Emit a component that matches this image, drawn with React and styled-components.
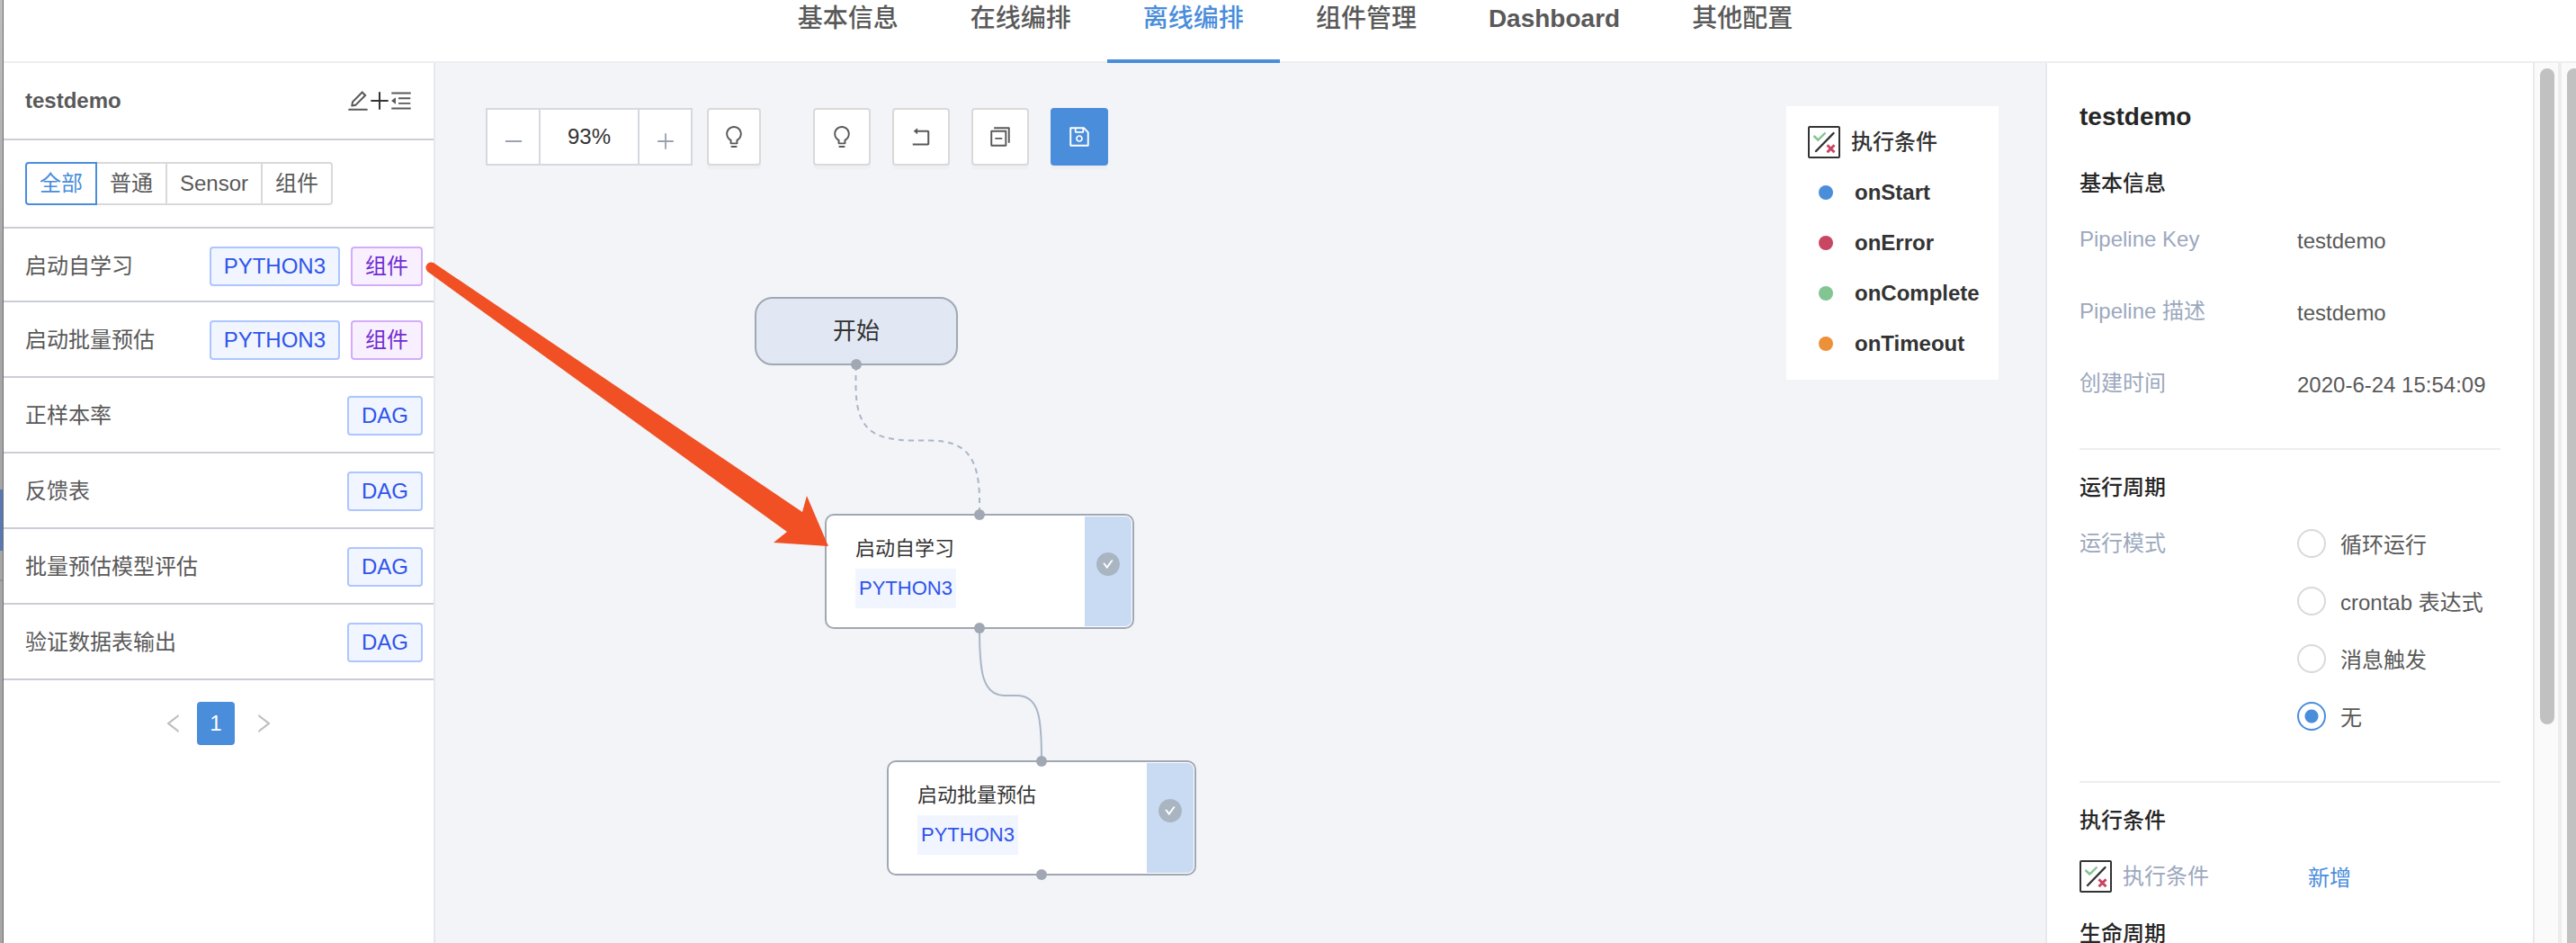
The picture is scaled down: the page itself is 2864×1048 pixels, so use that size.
import React, { useState } from "react";
import styled, { createGlobalStyle } from "styled-components";
import {
  AiOutlineEdit,
  AiOutlinePlus,
  AiOutlineMinus,
  AiOutlineMenuFold,
  AiOutlineLeft,
  AiOutlineRight,
  AiOutlineBulb,
  AiOutlineRollback,
  AiOutlineSwitcher,
  AiOutlineSave,
  AiFillCheckCircle,
} from "react-icons/ai";

const color = {
  primary: "#4a8ddb",
  text: "#595959",
  strong: "#333333",
  title: "#262626",
  label: "#9ca8bd",
  line: "#edeef0",
  rowLine: "#cbced9",
  border: "#d9d9d9",
  canvas: "#f2f4f8",
  nodeBorder: "#a1a8b3",
  edge: "#a9b6c7",
};

const GlobalStyle = createGlobalStyle`
  * { box-sizing: border-box; }
  body {
    margin: 0;
    color: ${color.text};
    background: #fff;
    font: 24px/36px "Liberation Sans", "Noto Sans CJK SC", sans-serif;
  }
  button, input { font: inherit; color: inherit; }
  button { padding: 0; cursor: pointer; }
  h1, h2, p, ul, dl, dd { margin: 0; padding: 0; }
`;

/* ---------- frame ---------- */

const Page = styled.div`
  position: relative;
  display: flex;
  height: 100vh;
  overflow: hidden;
`;

const Edge = styled.div`
  flex: none;
  display: flex;
  flex-direction: column;
  gap: 32px;
  width: 4px;
  padding-top: 544px;
  border-right: 1px solid #6e6e6e;
  background: linear-gradient(#bdbdbd, #a6a6a6 30%);
`;

const EdgeMark = styled.div`
  height: 68px;
  background: #5a78b4;
`;

const EdgeLine = styled.div`
  height: 2px;
  background: #939393;
`;

const Main = styled.div`
  flex: 1;
  min-width: 0;
  display: flex;
  flex-direction: column;
`;

const Nav = styled.nav`
  flex: none;
  display: flex;
  justify-content: center;
  height: 70px;
  padding-left: 12px;
  border-bottom: 2px solid ${color.line};
`;

const NavLink = styled.a`
  height: 70px;
  padding: 0 40px;
  border-bottom: 4px solid ${(p) => (p.$active ? color.primary : "transparent")};
  color: ${(p) => (p.$active ? color.primary : color.text)};
  font-size: 28px;
  font-weight: ${(p) => (p.$latin ? 700 : 500)};
  line-height: 42px;
  text-decoration: none;
`;

const Body = styled.div`
  flex: 1;
  min-height: 0;
  display: flex;
`;

/* ---------- sidebar ---------- */

const Sidebar = styled.aside`
  flex: none;
  width: 480px;
  border-right: 2px solid #e6e8ee;
`;

const SideHead = styled.header`
  display: flex;
  align-items: center;
  justify-content: space-between;
  height: 86px;
  padding: 0 24px;
  border-bottom: 2px solid ${color.rowLine};
`;

const SideTitle = styled.h1`
  font-size: 24px;
  font-weight: 700;
  line-height: 36px;
`;

const Actions = styled.div`
  display: flex;
`;

const IconButton = styled.button`
  display: flex;
  border: 0;
  background: none;
  color: ${(p) => (p.$dark ? color.strong : color.text)};
`;

const Filters = styled.div`
  display: flex;
  height: 98px;
  padding: 24px;
  border-bottom: 2px solid ${color.rowLine};
`;

const FilterLabel = styled.label`
  height: 48px;
  padding: 0 14px;
  border: 2px solid ${color.border};
  border-left-width: 0;
  line-height: 44px;
  cursor: pointer;

  &:first-child { border-left-width: 2px; border-radius: 4px 0 0 4px; }
  &:last-child { border-radius: 0 4px 4px 0; }
  &:has(input:checked) { border-color: ${color.primary}; color: ${color.primary}; }
  &:has(input:focus-visible) { outline: 2px solid ${color.primary}; }
`;

const HiddenRadio = styled.input`
  position: absolute;
  width: 1px;
  height: 1px;
  margin: 0;
  opacity: 0;
`;

const Rows = styled.ul`
  list-style: none;
`;

const Row = styled.li`
  display: flex;
  align-items: flex-start;
  gap: 12px;
  height: 84px;
  padding: 20px 12px 0 24px;
  border-bottom: 2px solid ${color.rowLine};

  &:first-child { height: 82px; }
`;

const RowName = styled.span`
  flex: 1;
  line-height: 44px;
`;

const tagTones = {
  blue: ["#2f54eb", "#f0f5ff", "#adc6ff"],
  purple: ["#722ed1", "#f9f0ff", "#d3adf7"],
};

const Tag = styled.span`
  height: 44px;
  padding: 0 14px;
  border: 2px solid ${(p) => tagTones[p.$tone][2]};
  border-radius: 4px;
  background: ${(p) => tagTones[p.$tone][1]};
  color: ${(p) => tagTones[p.$tone][0]};
  line-height: 40px;
`;

const Pager = styled.div`
  display: flex;
  align-items: center;
  justify-content: center;
  gap: 14px;
  padding: 24px 12px;
`;

const PagerArrow = styled.button`
  display: flex;
  border: 0;
  background: none;
  color: #bfbfbf;
`;

const PagerNumber = styled.button`
  width: 42px;
  height: 48px;
  margin-right: 6px;
  border: 0;
  border-radius: 4px;
  background: ${color.primary};
  color: #fff;
`;

/* ---------- canvas ---------- */

const Canvas = styled.main`
  position: relative;
  flex: 1;
  min-width: 0;
  overflow: hidden;
  background: ${color.canvas};
`;

const CanvasTop = styled.div`
  display: flex;
  align-items: flex-start;
  justify-content: space-between;
  padding: 48px 52px 0 56px;
`;

const Toolbar = styled.div`
  display: flex;
  align-items: flex-start;
  gap: 24px;
  padding-top: 2px;
`;

const ZoomTools = styled.div`
  display: flex;
  align-items: flex-end;
  gap: 16px;
  margin-right: 34px;
`;

const Zoom = styled.div`
  display: flex;
  height: 64px;
  border: 2px solid #d5d8de;
  background: #fff;
`;

const ZoomButton = styled.button`
  display: flex;
  align-items: center;
  justify-content: center;
  width: 57px;
  padding-top: 10px;
  border: 0;
  background: none;
  color: #9aa3b2;
`;

const ZoomValue = styled.output`
  width: 112px;
  border: solid #d5d8de;
  border-width: 0 2px;
  color: ${color.strong};
  line-height: 60px;
  text-align: center;
`;

const ToolButton = styled.button`
  display: flex;
  align-items: center;
  justify-content: center;
  width: ${(p) => (p.$narrow ? 60 : 64)}px;
  height: 64px;
  border: 2px solid ${(p) => (p.$primary ? color.primary : color.border)};
  border-radius: 4px;
  background: ${(p) => (p.$primary ? color.primary : "#fff")};
  box-shadow: 0 4px 0 rgba(0, 0, 0, 0.02);
  color: ${(p) => (p.$primary ? "#fff" : color.text)};
`;

const Legend = styled.section`
  width: 236px;
  padding: 22px 20px 12px 24px;
  background: #fff;
  color: ${color.strong};
`;

const LegendHead = styled.div`
  display: flex;
  align-items: center;
  gap: 12px;
  margin-bottom: 10px;
  font-weight: 500;
`;

const LegendItem = styled.div`
  display: flex;
  align-items: center;
  gap: 24px;
  height: 56px;
  padding-left: 12px;
  font-weight: 700;
`;

const Dot = styled.i`
  flex: none;
  width: 16px;
  height: 16px;
  border-radius: 50%;
  background: ${(p) => p.$color};
`;

const Edges = styled.svg`
  position: absolute;
  top: 0;
  left: 0;
  fill: none;
  stroke: ${color.edge};
  stroke-width: 2;
`;

const Node = styled.div`
  position: absolute;
  left: ${(p) => p.$x}px;
  top: ${(p) => p.$y}px;
  display: flex;
  border: 2px solid ${color.nodeBorder};
  color: ${color.strong};
`;

const StartNode = styled(Node)`
  align-items: center;
  justify-content: center;
  width: 226px;
  height: 76px;
  border-radius: 20px;
  background: #e1e8f4;
  font-size: 26px;
`;

const TaskNode = styled(Node)`
  justify-content: space-between;
  width: 344px;
  height: 128px;
  padding: 1px;
  border-radius: 10px;
  background: #fff;
`;

const TaskInfo = styled.div`
  display: flex;
  flex-direction: column;
  align-items: flex-start;
  padding: 18px 31px;
  font-size: 22px;
`;

const TaskType = styled.span`
  margin-top: 4px;
  padding: 0 4px;
  background: #f0f5ff;
  color: #2f54eb;
  line-height: 44px;
`;

const TaskState = styled.div`
  display: flex;
  justify-content: center;
  width: 52px;
  padding-top: 40px;
  border-radius: 0 7px 7px 0;
  background: #c9dbf3;
  color: #aab5c2;
`;

const CheckDisc = styled.span`
  display: flex;
  width: 26px;
  height: 26px;
  border-radius: 50%;
  background: radial-gradient(#fff 9px, transparent 10px);
`;

const Port = styled.i`
  position: absolute;
  left: 50%;
  ${(p) => p.$side}: -7px;
  width: 12px;
  height: 12px;
  margin-left: -6px;
  border-radius: 50%;
  background: ${color.nodeBorder};
`;

/* ---------- details ---------- */

const Details = styled.aside`
  flex: none;
  width: 544px;
  padding: 40px 36px 0;
  border: solid #e8e9ed;
  border-width: 0 2px;
  overflow: hidden;
`;

const DetailsTitle = styled.h1`
  margin-bottom: 36px;
  color: ${color.title};
  font-size: 28px;
  font-weight: 700;
  line-height: 40px;
`;

const Section = styled.section`
  margin-bottom: 24px;
  padding-bottom: ${(p) => (p.$divided ? 50 : 0)}px;
  border-bottom: ${(p) => (p.$divided ? 2 : 0)}px solid ${color.line};
`;

const SectionTitle = styled.h2`
  margin-bottom: 26px;
  color: ${color.title};
  font-size: 24px;
  font-weight: 500;
  line-height: 36px;
`;

const Fields = styled.dl`
  display: grid;
  grid-template-columns: 242px 1fr;
  row-gap: 40px;
`;

const FieldName = styled.dt`
  display: flex;
  gap: 12px;
  color: ${color.label};
  line-height: 36px;
`;

const FieldValue = styled.dd`
  line-height: 40px;
`;

const Modes = styled.div`
  display: flex;
  flex-direction: column;
  gap: 24px;
`;

const Mode = styled.label`
  display: flex;
  align-items: flex-start;
  gap: 16px;
  line-height: 40px;
  cursor: pointer;
`;

const ModeRadio = styled.input`
  appearance: none;
  width: 32px;
  height: 32px;
  margin: 2px 0 0;
  border: 2px solid ${color.border};
  border-radius: 50%;

  &:checked {
    border-color: ${color.primary};
    background: radial-gradient(${color.primary} 7px, #fff 8px);
  }
`;

const AddLink = styled.a`
  margin-left: 12px;
  color: ${color.primary};
  text-decoration: none;
`;

const Track = styled.div`
  flex: none;
  width: ${(p) => (p.$outer ? 16 : 30)}px;
  padding: 6px 0 0 6px;
  border-right: ${(p) => (p.$outer ? 0 : 4)}px solid #ececec;
  background: #fafafa;
  overflow: hidden;
`;

const Thumb = styled.div`
  width: 16px;
  height: ${(p) => p.$length};
  border-radius: 8px;
  background: #c1c1c1;
`;

const Pointer = styled.svg`
  position: absolute;
  left: 470px;
  top: 280px;
  pointer-events: none;
`;

/* Trims the empty margin that the icon set leaves round each glyph. */
const Icon = ({ of: Glyph, size = 24 }) => <Glyph size={size} viewBox="64 64 896 896" />;

const ConditionIcon = () => (
  <svg width="36" height="36" viewBox="0 0 36 36" fill="none" strokeWidth="2.4">
    <rect x="1" y="1" width="34" height="34" rx="1" stroke="#333" strokeWidth="2" />
    <path d="M6.5 11l4.8 4.5 8.2-8" stroke="#82c492" />
    <path d="M28.5 8L9 28" stroke="#333" strokeLinecap="round" />
    <path d="M21.5 21.2l8 8M29.5 21.2l-8 8" stroke="#c94663" strokeWidth="3" />
  </svg>
);

const tabs = ["基本信息", "在线编排", "离线编排", "组件管理", "Dashboard", "其他配置"];
const filters = ["全部", "普通", "Sensor", "组件"];
const components = [
  { name: "启动自学习", type: "PYTHON3", reusable: true },
  { name: "启动批量预估", type: "PYTHON3", reusable: true },
  { name: "正样本率", type: "DAG" },
  { name: "反馈表", type: "DAG" },
  { name: "批量预估模型评估", type: "DAG" },
  { name: "验证数据表输出", type: "DAG" },
];
const conditions = [
  ["onStart", "#4a8ddb"],
  ["onError", "#c94663"],
  ["onComplete", "#82c492"],
  ["onTimeout", "#ec9138"],
];
const tasks = [
  { name: "启动自学习", x: 433, y: 501 },
  { name: "启动批量预估", x: 502, y: 775 },
];
const modes = ["循环运行", "crontab 表达式", "消息触发", "无"];

export default function App() {
  const [filter, setFilter] = useState("全部");
  const [mode, setMode] = useState("无");

  return (
    <Page>
      <GlobalStyle />
      <Edge>
        <EdgeMark />
        <EdgeLine />
      </Edge>
      <Main>
        <Nav>
          {tabs.map((t) => (
            <NavLink key={t} href="#" $active={t === "离线编排"} $latin={t === "Dashboard"}>
              {t}
            </NavLink>
          ))}
        </Nav>
        <Body>
          <Sidebar>
            <SideHead>
              <SideTitle>testdemo</SideTitle>
              <Actions>
                <IconButton aria-label="编辑"><Icon of={AiOutlineEdit} /></IconButton>
                <IconButton aria-label="添加" $dark><Icon of={AiOutlinePlus} /></IconButton>
                <IconButton aria-label="收起"><Icon of={AiOutlineMenuFold} /></IconButton>
              </Actions>
            </SideHead>
            <Filters>
              {filters.map((f) => (
                <FilterLabel key={f}>
                  <HiddenRadio
                    type="radio"
                    name="filter"
                    checked={filter === f}
                    onChange={() => setFilter(f)}
                  />
                  {f}
                </FilterLabel>
              ))}
            </Filters>
            <Rows>
              {components.map((c) => (
                <Row key={c.name}>
                  <RowName>{c.name}</RowName>
                  <Tag $tone="blue">{c.type}</Tag>
                  {c.reusable && <Tag $tone="purple">组件</Tag>}
                </Row>
              ))}
            </Rows>
            <Pager>
              <PagerArrow aria-label="上一页"><Icon of={AiOutlineLeft} /></PagerArrow>
              <PagerNumber>1</PagerNumber>
              <PagerArrow aria-label="下一页"><Icon of={AiOutlineRight} /></PagerArrow>
            </Pager>
          </Sidebar>

          <Canvas>
            <CanvasTop>
              <Toolbar>
                <ZoomTools>
                  <Zoom>
                    <ZoomButton aria-label="缩小"><Icon of={AiOutlineMinus} size={22} /></ZoomButton>
                    <ZoomValue>93%</ZoomValue>
                    <ZoomButton aria-label="放大"><Icon of={AiOutlinePlus} size={22} /></ZoomButton>
                  </Zoom>
                  <ToolButton $narrow aria-label="提示"><Icon of={AiOutlineBulb} /></ToolButton>
                </ZoomTools>
                <ToolButton aria-label="帮助"><Icon of={AiOutlineBulb} /></ToolButton>
                <ToolButton aria-label="撤销"><Icon of={AiOutlineRollback} /></ToolButton>
                <ToolButton aria-label="收起全部"><Icon of={AiOutlineSwitcher} /></ToolButton>
                <ToolButton aria-label="保存" $primary><Icon of={AiOutlineSave} /></ToolButton>
              </Toolbar>
              <Legend>
                <LegendHead>
                  <ConditionIcon />
                  执行条件
                </LegendHead>
                {conditions.map(([name, c]) => (
                  <LegendItem key={name}>
                    <Dot $color={c} />
                    {name}
                  </LegendItem>
                ))}
              </Legend>
            </CanvasTop>

            <Edges width="900" height="920">
              <path
                d="M467.500 336V360C468 405 484 419 530 419.500H550C592 420 603 440 605 480V501"
                strokeDasharray="6 5"
              />
              <path d="M605 629C605 676 608 702 632 703H648C672 704 674 730 674 775" />
            </Edges>
            <StartNode $x={355} $y={260}>
              开始
              <Port $side="bottom" />
            </StartNode>
            {tasks.map((t) => (
              <TaskNode key={t.name} $x={t.x} $y={t.y}>
                <TaskInfo>
                  {t.name}
                  <TaskType>PYTHON3</TaskType>
                </TaskInfo>
                <TaskState>
                  <CheckDisc><Icon of={AiFillCheckCircle} size={26} /></CheckDisc>
                </TaskState>
                <Port $side="top" />
                <Port $side="bottom" />
              </TaskNode>
            ))}
          </Canvas>

          <Details>
            <DetailsTitle>testdemo</DetailsTitle>
            <Section $divided>
              <SectionTitle>基本信息</SectionTitle>
              <Fields>
                <FieldName>Pipeline Key</FieldName>
                <FieldValue>testdemo</FieldValue>
                <FieldName>Pipeline 描述</FieldName>
                <FieldValue>testdemo</FieldValue>
                <FieldName>创建时间</FieldName>
                <FieldValue>2020-6-24 15:54:09</FieldValue>
              </Fields>
            </Section>
            <Section $divided>
              <SectionTitle>运行周期</SectionTitle>
              <Fields>
                <FieldName>运行模式</FieldName>
                <FieldValue>
                  <Modes>
                    {modes.map((m) => (
                      <Mode key={m}>
                        <ModeRadio
                          type="radio"
                          name="mode"
                          checked={mode === m}
                          onChange={() => setMode(m)}
                        />
                        {m}
                      </Mode>
                    ))}
                  </Modes>
                </FieldValue>
              </Fields>
            </Section>
            <Section>
              <SectionTitle>执行条件</SectionTitle>
              <Fields>
                <FieldName>
                  <ConditionIcon />
                  执行条件
                </FieldName>
                <FieldValue>
                  <AddLink href="#">新增</AddLink>
                </FieldValue>
              </Fields>
            </Section>
            <Section>
              <SectionTitle>生命周期</SectionTitle>
            </Section>
          </Details>
          <Track>
            <Thumb $length="75%" />
          </Track>
          <Track $outer>
            <Thumb $length="120%" />
          </Track>
        </Body>
      </Main>

      <Pointer width="460" height="340">
        <path
          d="M12 12L422 289L427 271L451 327L390 323L405 311L7 23A6 6 0 0 1 12 12Z"
          fill="#f05023"
        />
      </Pointer>
    </Page>
  );
}
